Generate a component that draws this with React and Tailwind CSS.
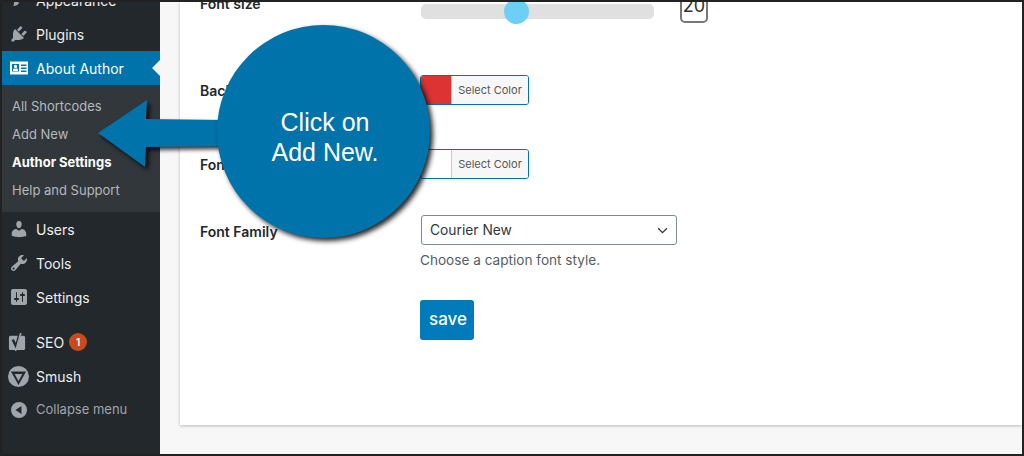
const FONT = "font-['Inter','Liberation_Sans',sans-serif]";

const Icon = ({ d, className = "w-5 h-5", fill = "#a0a5aa" }) => (
  <svg viewBox="0 0 20 20" className={className} fill={fill}><path d={d} fillRule="evenodd" /></svg>
);

const ICONS = {
  plugins: "M13.11 4.36L9.87 7.6 8 5.73l3.24-3.24c.35-.34 1.05-.2 1.56.32.52.51.66 1.21.31 1.55zm-8 1.77l.91-1.12 9.01 9.01-1.19.84c-.71.71-2.63 1.16-3.82 1.16H6.14L4.9 17.26c-.59.59-1.54.59-2.12 0-.59-.58-.59-1.53 0-2.12l1.24-1.24v-3.88c0-1.13.4-3.19 1.09-3.89zm7.26 3.97l3.24-3.24c.34-.35 1.04-.21 1.55.31.52.51.66 1.21.31 1.55l-3.24 3.25z",
  users: "M10 9.25c-2.27 0-2.73-3.44-2.73-3.44C7 4.02 7.82 2 9.97 2c2.16 0 2.98 2.02 2.71 3.81 0 0-.41 3.44-2.68 3.44zm0 2.57L12.72 10c2.39 0 4.52 2.33 4.52 4.53v2.49s-3.65 1.13-7.24 1.13c-3.65 0-7.24-1.13-7.24-1.13v-2.49c0-2.25 1.94-4.48 4.47-4.48z",
  tools: "M16.68 9.77c-1.34 1.34-3.3 1.67-4.95.99l-5.41 6.52c-.99.99-2.59.99-3.58 0s-.99-2.59 0-3.57l6.52-5.42c-.68-1.65-.35-3.61.99-4.95 1.28-1.28 3.12-1.62 4.72-1.06l-2.89 2.89 2.82 2.82 2.86-2.87c.53 1.58.18 3.39-1.08 4.65zM3.81 16.21c.4.39 1.04.39 1.43 0 .4-.4.4-1.04 0-1.43-.39-.4-1.03-.4-1.43 0-.39.39-.39 1.03 0 1.43z",
  settings: "M18 16V4c0-1.1-.9-2-2-2H4c-1.1 0-2 .9-2 2v12c0 1.1.9 2 2 2h12c1.1 0 2-.9 2-2zM8 11h1c.55 0 1 .45 1 1s-.45 1-1 1H8v1.5c0 .28-.22.5-.5.5s-.5-.22-.5-.5V13H6c-.55 0-1-.45-1-1s.45-1 1-1h1V5.500c0-.28.22-.5.5-.5s.5.22.5.5V11zm5-2h-1c-.55 0-1-.45-1-1s.45-1 1-1h1V5.500c0-.28.22-.5.5-.5s.5.22.5.5V7h1c.55 0 1 .45 1 1s-.45 1-1 1h-1v5.500c0 .28-.22.5-.5.5s-.5-.22-.5-.5V9z",
  paint: "M14 3l3 3-6 6-3-3zM7 10l3 3c-1 2-3 3-6 3 1-1 1-2 1-3 0-1 1-3 2-3z",
  card: "M1 3.500h18v13H1zM3 6v7.500h7V6zm9 .5v1.500h5.500V6.500zm0 3v1.500h5.500V9.500zm0 3V14h5.500v-1.500zM6.500 6.800c1 0 1.500.8 1.500 1.700s-.6 1.800-1.500 1.800S5 9.400 5 8.500s.5-1.700 1.500-1.700zM4 13v-1.300c0-.8.8-1.300 1.500-1.300l1 .6 1-.6c.7 0 1.500.5 1.500 1.300V13z",
  smush: "M10 0a10 10 0 1 0 0 20 10 10 0 0 0 0-20zM2.800 5.200h14.400L10 18.200zM6.300 7.600L10 14.300 13.700 7.600z",
  collapse: "M10 2a8 8 0 1 0 0 16 8 8 0 0 0 0-16zm2.500 4v8L6.500 10z",
};

const YoastIcon = () => (
  <svg viewBox="0 0 20 22" className="h-[21px] w-[19px] -ml-[1px]">
    <path d="M3 4h13c1.300 0 2 .8 2 2v11c0 1.300-.7 2-2 2H3c-1.300 0-2-.7-2-2V6c0-1.200.7-2 2-2z" fill="#a0a5aa" />
    <path d="M5 8l3.500 7 3.700-13" fill="none" stroke="#23282d" strokeWidth="2.600" />
    <path d="M12.500 1l1.800 0-5.500 19-1.600 0" fill="#a0a5aa" />
  </svg>
);

const MenuItem = ({ icon, label, iconClass, iconNode, children }) => (
  <div className="flex h-[34px] items-center pl-[7px] text-[14px] text-[#eeeeee]">
    <span className="flex w-[27px] shrink-0">{iconNode || <Icon d={icon} className={iconClass || "w-5 h-5"} />}</span>
    <span>{label}</span>
    {children}
  </div>
);

const Sidebar = () => (
  <aside className="w-[158px] shrink-0 bg-[#23282d] -mt-[19px]">
    <MenuItem icon={ICONS.paint} label="Appearance" />
    <MenuItem icon={ICONS.plugins} label="Plugins" />
    <div className="relative flex h-[34px] items-center bg-[#0073aa] pl-[7px] text-[14px] text-white">
      <span className="flex w-[27px]"><Icon d={ICONS.card} fill="#ffffff" /></span>
      <span>About Author</span>
      <span className="absolute right-0 top-[9px] h-0 w-0 border-y-[8px] border-r-[8px] border-y-transparent border-r-[#f1f1f1]" />
    </div>
    <div className="flex h-[127px] flex-col bg-[#32373c] pt-[7px] text-[13px] text-[#b4b9be]">
      <div className="flex h-[28px] items-center pl-[10px] pt-[1px]">All Shortcodes</div>
      <div className="flex h-[28px] items-center pl-[10px] pt-[1px]">Add New</div>
      <div className="flex h-[28px] items-center pl-[10px] pt-[1px] font-bold text-white">Author Settings</div>
      <div className="flex h-[28px] items-center pl-[10px] pt-[1px]">Help and Support</div>
    </div>
    <MenuItem icon={ICONS.users} label="Users" />
    <MenuItem icon={ICONS.tools} label="Tools" />
    <MenuItem icon={ICONS.settings} label="Settings" />
    <div className="h-[11px]" />
    <MenuItem iconNode={<YoastIcon />} label="SEO">
      <span className="ml-[5px] flex h-[18px] w-[18px] items-center justify-center rounded-full bg-[#ca4a1f] text-[10px] font-semibold text-white">1</span>
    </MenuItem>
    <MenuItem icon={ICONS.smush} label="Smush" iconClass="w-[21px] h-[21px] -ml-[1px]" />
    <div className="flex h-[34px] items-center pl-[7px] text-[13px] text-[#a0a5aa]">
      <span className="flex w-[27px]"><Icon d={ICONS.collapse} /></span>
      <span>Collapse menu</span>
    </div>
  </aside>
);

const ColorButton = ({ swatch }) => (
  <div className="flex h-[30px] w-[109px] overflow-hidden rounded-[3px] border border-[#0073aa]">
    <span className={`w-[31px] shrink-0 border-r border-[#cccccc] ${swatch}`} />
    <span className="flex flex-1 items-center justify-center bg-[#f7f7f7] text-[11px] text-[#555555]">Select Color</span>
  </div>
);

const Field = ({ label, labelClass = "", className, children }) => (
  <div className={`flex ${className}`}>
    <div className={`w-[220px] shrink-0 text-[14px] font-semibold text-[#23282d] ${labelClass}`}>{label}</div>
    <div className="flex-1">{children}</div>
  </div>
);

const Card = () => (
  <main className="flex-1 min-w-0 bg-[#f7f7f7] pl-[20px]">
    <div className="h-[423px] overflow-hidden bg-white pl-[20px] shadow-[0_1px_3px_rgba(0,0,0,0.25)]">
      <div className="-mt-[11px] flex h-[60px]">
        <div className="mt-[2px] w-[221px] shrink-0 text-[14px] font-semibold text-[#23282d]">Font size</div>
        <div className="relative mt-[13px] h-[15px] w-[233px] rounded-[5px] bg-[#e0e0e0]">
          <span className="absolute left-[83px] top-[-5px] h-[25px] w-[25px] rounded-full bg-[#6ecff6]" />
        </div>
        <div className="-mt-[1px] ml-[26px] flex h-[33px] w-[28px] items-start justify-center rounded-[5px] border-2 border-[#777777] text-[18px] leading-[28px] text-[#333333]">20</div>
      </div>
      <Field label="Background Color" className="mt-[24px] items-center">
        <ColorButton swatch="bg-[#dd3333]" />
      </Field>
      <Field label="Font Color" className="mt-[44px] items-center">
        <ColorButton swatch="bg-white" />
      </Field>
      <Field label="Font Family" labelClass="pt-[3px]" className="mt-[36px] items-center">
        <div className="ml-px flex h-[30px] w-[256px] items-center justify-between rounded-[3px] border border-[#7e8993] px-[8px] text-[13.8px] text-[#32373c]">
          <span>Courier New</span>
          <svg viewBox="0 0 12 8" className="h-[7px] w-[11px]" fill="none" stroke="#32373c" strokeWidth="1.5"><path d="M1 1.500l5 5 5-5" /></svg>
        </div>
      </Field>
      <div className="ml-[220px] mt-[5px] text-[13.6px] leading-[20px] text-[#555d66]">Choose a caption font style.</div>
      <button className="ml-[220px] mt-[30px] flex h-[40px] w-[54px] items-center justify-center rounded-[3px] bg-[#007ab9] pl-[2px] text-[17px] font-medium text-white">save</button>
    </div>
  </main>
);

const Callout = () => (
  <>
    <svg className="absolute left-[94px] top-[96px] h-[74px] w-[130px] drop-shadow-[3px_3px_2px_rgba(0,0,0,0.8)]" viewBox="96 98 130 74">
      <path d="M98 133 L147 100 L146 119 L226 120 L226 146 L146 147 L145 167 Z" fill="#0073aa" />
    </svg>
    <div className="absolute left-[215px] top-[23px] flex h-[213px] w-[213px] flex-col items-center justify-center rounded-full bg-[#0073aa] pl-[3px] pt-[11px] font-['Liberation_Sans',sans-serif] text-[25px] leading-[30px] text-white shadow-[3px_3px_5px_rgba(0,0,0,0.85)]">
      <span>Click on</span>
      <span>Add New.</span>
    </div>
  </>
);

export default function App() {
  return (
    <div className={`relative flex h-[456px] w-[1024px] overflow-hidden border-2 border-[#222222] ${FONT}`}>
      <Sidebar />
      <Card />
      <Callout />
    </div>
  );
}
